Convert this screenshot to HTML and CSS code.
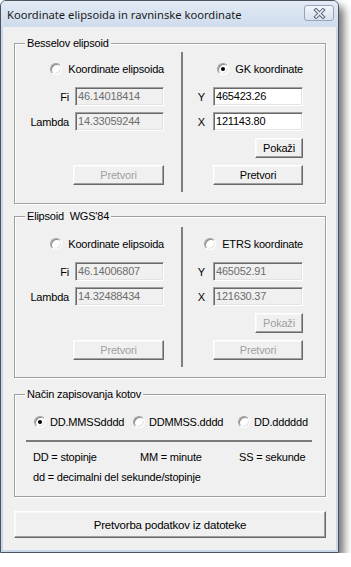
FILE: index.html
```
<!DOCTYPE html>
<html>
<head>
<meta charset="utf-8">
<link rel="stylesheet" href="styles.css">
</head>
<body>
<div class="window">
  <div class="titlebar">
    <span class="title">Koordinate elipsoida in ravninske koordinate</span>
    <span class="close"><svg width="13" height="11" viewBox="0 0 13 11"><path d="M3 2 L10 9 M10 2 L3 9" stroke="#5b6679" stroke-width="3.6" stroke-linecap="square" fill="none"/><path d="M3 2 L10 9 M10 2 L3 9" stroke="#eef1f5" stroke-width="1.6" stroke-linecap="square" fill="none"/></svg></span>
  </div>
  <div class="client">
    <fieldset class="group g1">
      <legend>Besselov elipsoid</legend>
      <div class="cols">
        <div class="col left">
          <div class="radio-row"><span class="radio"></span><span>Koordinate elipsoida</span></div>
          <div class="field f1"><span class="lbl">Fi</span><span class="input disabled">46.14018414</span></div>
          <div class="field f2"><span class="lbl">Lambda</span><span class="input disabled">14.33059244</span></div>
          <div class="btn pretvori disabled">Pretvori</div>
        </div>
        <div class="col right">
          <div class="radio-row"><span class="radio checked"></span><span>GK koordinate</span></div>
          <div class="field f1"><span class="lbl">Y</span><span class="input">465423.26</span></div>
          <div class="field f2"><span class="lbl">X</span><span class="input">121143.80</span></div>
          <div class="btn pokazi">Pokaži</div>
          <div class="btn pretvori">Pretvori</div>
        </div>
      </div>
    </fieldset>
    <fieldset class="group g2">
      <legend>Elipsoid&nbsp; WGS'84</legend>
      <div class="cols">
        <div class="col left">
          <div class="radio-row"><span class="radio"></span><span>Koordinate elipsoida</span></div>
          <div class="field f1"><span class="lbl">Fi</span><span class="input disabled">46.14006807</span></div>
          <div class="field f2"><span class="lbl">Lambda</span><span class="input disabled">14.32488434</span></div>
          <div class="btn pretvori disabled">Pretvori</div>
        </div>
        <div class="col right">
          <div class="radio-row"><span class="radio"></span><span>ETRS koordinate</span></div>
          <div class="field f1"><span class="lbl">Y</span><span class="input disabled">465052.91</span></div>
          <div class="field f2"><span class="lbl">X</span><span class="input disabled">121630.37</span></div>
          <div class="btn pokazi disabled">Pokaži</div>
          <div class="btn pretvori disabled">Pretvori</div>
        </div>
      </div>
    </fieldset>
    <fieldset class="group g3">
      <legend>Način zapisovanja kotov</legend>
      <div class="g3body">
        <div class="modes">
          <div class="radio-row"><span class="radio checked"></span><span>DD.MMSSdddd</span></div>
          <div class="radio-row"><span class="radio"></span><span>DDMMSS.dddd</span></div>
          <div class="radio-row"><span class="radio"></span><span>DD.dddddd</span></div>
        </div>
        <div class="hsep"></div>
        <div class="keys">
          <span>DD = stopinje</span>
          <span>MM = minute</span>
          <span>SS = sekunde</span>
        </div>
        <div class="note">dd = decimalni del sekunde/stopinje</div>
      </div>
    </fieldset>
    <div class="btn bigbtn">Pretvorba podatkov iz datoteke</div>
  </div>
</div>
</body>
</html>
```
FILE: styles.css
```
* { box-sizing: border-box; }
body {
  margin: 0;
  background: #fff;
  font-family: "Liberation Sans", Arial, sans-serif;
  font-size: 11px;
  letter-spacing: -0.2px;
  color: #000;
}
.window {
  width: 339px;
  height: 553px;
  border: 1px solid #4b535e;
  border-radius: 6px 6px 0 0;
  background: #c8d7ea;
  box-shadow: 5px 6px 9px rgba(0,0,0,0.55);
  display: flex;
  flex-direction: column;
}
.titlebar {
  height: 26px;
  flex: none;
  display: flex;
  justify-content: space-between;
  align-items: flex-start;
  padding: 0 4px 0 6px;
  background: linear-gradient(#e2eaf5, #cfdcec);
  border-radius: 5px 5px 0 0;
}
.title {
  font-family: "Noto Sans", sans-serif;
  font-size: 11.2px;
  letter-spacing: 0;
  line-height: 14px;
  margin-top: 7px;
  color: #1b1b1b;
}
.close {
  margin-top: 4px;
  width: 30px;
  height: 16px;
  border: 1px solid #97a4b7;
  border-radius: 3px;
  background: linear-gradient(#f4f7fb, #d8e1ed);
  display: flex;
  align-items: center;
  justify-content: center;
}
.client {
  flex: 1;
  margin: 0 2px 2px;
  background: #f0f0f0;
  padding: 10px 10px 0 11px;
  display: flex;
  flex-direction: column;
}
.group {
  margin: 0;
  padding: 0;
  min-width: 0;
  border: 1px solid #a0a0a0;
  box-shadow: inset 1px 1px 0 #fff, 1px 1px 0 #fff;
}
.group legend {
  margin-left: 10px;
  padding: 0 2px;
  line-height: 13px;
  background: #f0f0f0;
}
.g2 { margin-top: 6px; }
.g3 { margin-top: 10px; }
.cols {
  display: flex;
  height: 140px;
}
.g1 .cols { margin: 2px 0 11px; }
.g2 .cols { margin: 4px 0 10px; }
.col {
  display: flex;
  flex-direction: column;
  align-items: flex-end;
  padding-top: 10px;
  padding-bottom: 7px;
}
.col.left { width: 166px; padding-right: 17px; }
.col.right { flex: 1; border-left: 2px solid #7f7f7f; padding-right: 22px; }
.radio-row {
  display: flex;
  align-items: center;
  height: 14px;
  line-height: 14px;
  white-space: nowrap;
}
.radio {
  width: 12px;
  height: 12px;
  border-radius: 50%;
  background: #fff;
  border: 1px solid;
  border-color: #a0a0a0 #fff #fff #a0a0a0;
  box-shadow: inset 1px 1px 0 #8a8a8a, inset -1px -1px 0 #e3e3e3;
  position: relative;
  flex: none;
}
.radio.checked::after {
  content: "";
  position: absolute;
  left: 3px;
  top: 3px;
  width: 4px;
  height: 4px;
  border-radius: 50%;
  background: #000;
}
.col .radio { margin-right: 6px; }
.field {
  display: flex;
  align-items: center;
  height: 19px;
}
.f1 { margin-top: 11px; }
.f2 { margin-top: 6px; }
.left .lbl { margin-right: 6px; }
.right .lbl { margin-right: 8px; }
.input {
  height: 19px;
  border: 1px solid;
  border-color: #a0a0a0 #fff #fff #a0a0a0;
  box-shadow: inset 1px 1px 0 #696969, inset -1px -1px 0 #e3e3e3;
  background: #fff;
  padding-left: 2px;
  line-height: 17px;
}
.input.disabled { background: #f0f0f0; color: #6d6d6d; }
.left .input { width: 89px; }
.right .input { width: 90px; }
.btn {
  display: flex;
  align-items: center;
  justify-content: center;
  border: 1px solid;
  border-color: #fff #696969 #696969 #fff;
  box-shadow: inset -1px -1px 0 #a0a0a0, inset 1px 1px 0 #f8f8f8;
  background: #f0f0f0;
}
.btn.disabled { color: #a0a0a0; }
.pokazi { width: 48px; height: 20px; margin-top: 7px; }
.pretvori { height: 20px; margin-top: 7px; }
.left .pretvori { width: 91px; margin-top: auto; }
.right .pretvori { width: 90px; }
.g3body { padding: 14px 0 12px; }
.modes {
  display: grid;
  grid-template-columns: 99px 105px auto;
  padding-left: 19px;
}
.modes .radio { margin-right: 4px; }
.hsep {
  margin: 11px 13px 0 11px;
  height: 2px;
  background: #7b7b7b;
}
.keys {
  display: grid;
  grid-template-columns: 107px 99px auto;
  padding-left: 18px;
  margin-top: 8px;
  line-height: 14px;
}
.note {
  padding-left: 18px;
  margin-top: 6px;
  line-height: 14px;
}
.bigbtn {
  margin-top: 14px;
  height: 27px;
  font-size: 11.5px;
}
```
